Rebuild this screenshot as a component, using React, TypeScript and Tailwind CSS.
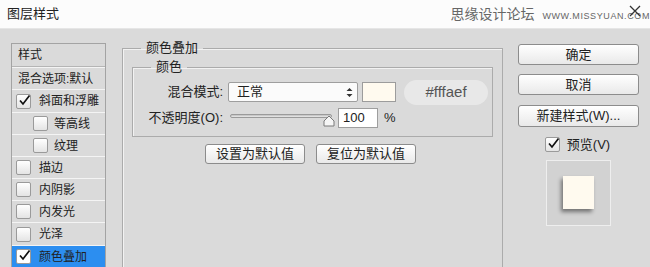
import React from 'react';

const font = { fontFamily: '"Liberation Sans", "Noto Sans CJK SC", sans-serif' };

interface StyleRow {
  label: string;
  check?: boolean;
  checked?: boolean;
  indent?: boolean;
  tall?: boolean;
  active?: boolean;
}

const rows: StyleRow[] = [
  { label: '混合选项:默认' },
  { label: '斜面和浮雕', check: true, checked: true, tall: true },
  { label: '等高线', check: true, indent: true },
  { label: '纹理', check: true, indent: true },
  { label: '描边', check: true },
  { label: '内阴影', check: true },
  { label: '内发光', check: true },
  { label: '光泽', check: true, tall: true },
  { label: '颜色叠加', check: true, checked: true, active: true },
];

const Check = ({ checked, white }: { checked?: boolean; white?: boolean }) => (
  <span
    className={`relative flex h-[15px] w-[15px] shrink-0 items-center justify-center rounded-[2px] border border-[#9a9a9a] ${
      white ? 'bg-white' : 'bg-gradient-to-b from-white to-[#e4e4e4]'
    }`}
  >
    {checked && (
      <svg width="13" height="13" viewBox="0 0 13 13" className="absolute -top-[1px] left-[1px]">
        <path d="M2 6.5 L5 10 L11.5 1.5" fill="none" stroke="#111" strokeWidth="1.7" />
      </svg>
    )}
  </span>
);

const Button = ({ children, className = '' }: { children: React.ReactNode; className?: string }) => (
  <div
    className={`flex items-center justify-center rounded-[3px] border border-[#8c8c8c] bg-gradient-to-b from-white to-[#e9e9e9] text-[13px] text-[#222] shadow-[inset_0_1px_0_#fff] ${className}`}
  >
    {children}
  </div>
);

export default function App() {
  return (
    <div className="h-[267px] w-[650px] overflow-hidden bg-[#dadada] text-[#222]" style={font}>
      {/* title bar */}
      <div className="relative flex h-[29px] items-center border-b border-[#e6e6e6] bg-[#fcfcfc] pl-[7px]">
        <span className="text-[13px] text-[#222]">图层样式</span>
        <span className="ml-auto flex items-baseline gap-[8px] text-[#666]">
          <span className="text-[14px]">思缘设计论坛</span>
          <span className="text-[9px] tracking-[0.6px]">WWW.MISSYUAN.COM</span>
        </span>
        <svg width="12" height="12" viewBox="0 0 12 12" className="absolute right-[9px] top-[5px]">
          <path d="M1 1 L11 11 M11 1 L1 11" stroke="#333" strokeWidth="1.3" />
        </svg>
      </div>

      <div className="flex pl-[11px]">
        {/* styles list */}
        <div className="mt-[14px] w-[95px] border border-b-0 border-[#a3a3a3] text-[12px]">
          <div className="flex h-[23px] items-center border-b border-[#b5b5b5] pl-[6px] shadow-[0_1px_0_#f5f5f5]">样式</div>
          {rows.map((r) => (
            <div
              key={r.label}
              className={`flex items-center border-t border-[#f4f4f4] ${r.tall ? 'h-[23px]' : 'h-[22px]'} ${
                r.active ? 'bg-[#2c8ef0]' : ''
              } ${r.check ? (r.indent ? 'pl-[21px]' : 'pl-[4px]') : 'pl-[6px]'}`}
            >
              {r.check && <Check checked={r.checked} white={r.active} />}
              <span className={r.check ? (r.indent ? 'ml-[6px]' : 'ml-[8px]') : ''}>{r.label}</span>
            </div>
          ))}
        </div>

        {/* main settings */}
        <fieldset className="ml-[16px] mt-[11px] h-[260px] w-[381px] border border-[#ababab] shadow-[inset_1px_1px_0_#f2f2f2]">
          <legend className="ml-[18px] px-[5px] text-[13px] leading-[16px]">颜色叠加</legend>
          <fieldset className="mx-[9px] mt-[3px] border border-[#ababab] pb-[8px] shadow-[inset_1px_1px_0_#f2f2f2]">
            <legend className="ml-[18px] px-[5px] text-[13px] leading-[16px]">颜色</legend>
            <div className="mt-[7px] flex items-center">
              <span className="w-[93px] pr-[3px] text-right text-[13px]">混合模式:</span>
              <div className="ml-[2px] flex h-[20px] w-[130px] items-center justify-between rounded-[2px] border border-[#9e9e9e] bg-[#fbfbfb] pl-[8px] pr-[4px] text-[13px]">
                <span>正常</span>
                <svg width="7" height="11" viewBox="0 0 7 11">
                  <path d="M0.5 4 L3.5 1 L6.5 4 Z M0.5 7 L3.5 10 L6.5 7 Z" fill="#333" />
                </svg>
              </div>
              <div className="ml-[4px] h-[20px] w-[34px] border border-[#9c9c9c] bg-[#fffaef]" />
              <div className="ml-[8px] -my-[3px] flex h-[25px] w-[84px] items-center justify-center rounded-full bg-[#e8e8e8] text-[15px] text-[#555]">
                #fffaef
              </div>
            </div>
            <div className="mt-[6px] flex items-center">
              <span className="w-[93px] pr-[3px] text-right text-[13px]">不透明度(O):</span>
              <div className="relative ml-[4px] h-[20px] w-[104px]">
                <div className="absolute left-0 right-[2px] top-[6px] h-[4px] rounded-[2px] border border-[#9a9a9a] bg-gradient-to-b from-[#bdbdbd] to-[#ececec]" />
                <svg width="12" height="12" viewBox="0 0 12 12" className="absolute right-[-1px] top-[7px]">
                  <path d="M1 11 L1 6 L6 1 L11 6 L11 11 Z" fill="#f6f6f6" stroke="#7a7a7a" strokeWidth="1" />
                </svg>
              </div>
              <div className="ml-[4px] flex h-[20px] w-[40px] items-center border border-[#9e9e9e] bg-white pl-[4px] text-[13px]">100</div>
              <span className="ml-[6px] text-[13px]">%</span>
            </div>
          </fieldset>
          <div className="mt-[7px] flex justify-center gap-[11px] pr-[4px]">
            <Button className="h-[20px] w-[100px]">设置为默认值</Button>
            <Button className="h-[20px] w-[100px]">复位为默认值</Button>
          </div>
        </fieldset>

        {/* right column */}
        <div className="ml-[15px] mt-[15px] flex w-[121px] flex-col items-center">
          <Button className="h-[21px] w-[121px]">确定</Button>
          <Button className="mt-[9px] h-[21px] w-[121px]">取消</Button>
          <Button className="mt-[10px] h-[22px] w-[121px]">新建样式(W)...</Button>
          <div className="mt-[8px] flex items-center gap-[7px] pr-[2px] text-[13px]">
            <Check checked />
            <span>预览(V)</span>
          </div>
          <div className="mt-[5px] flex h-[66px] w-[65px] items-center justify-center border border-[#eeeeee] bg-[#d2d2d2]">
            <div className="h-[33px] w-[31px] bg-[#fffaef] shadow-[-2px_3px_4px_rgba(0,0,0,0.45)]" />
          </div>
        </div>
      </div>
    </div>
  );
}
